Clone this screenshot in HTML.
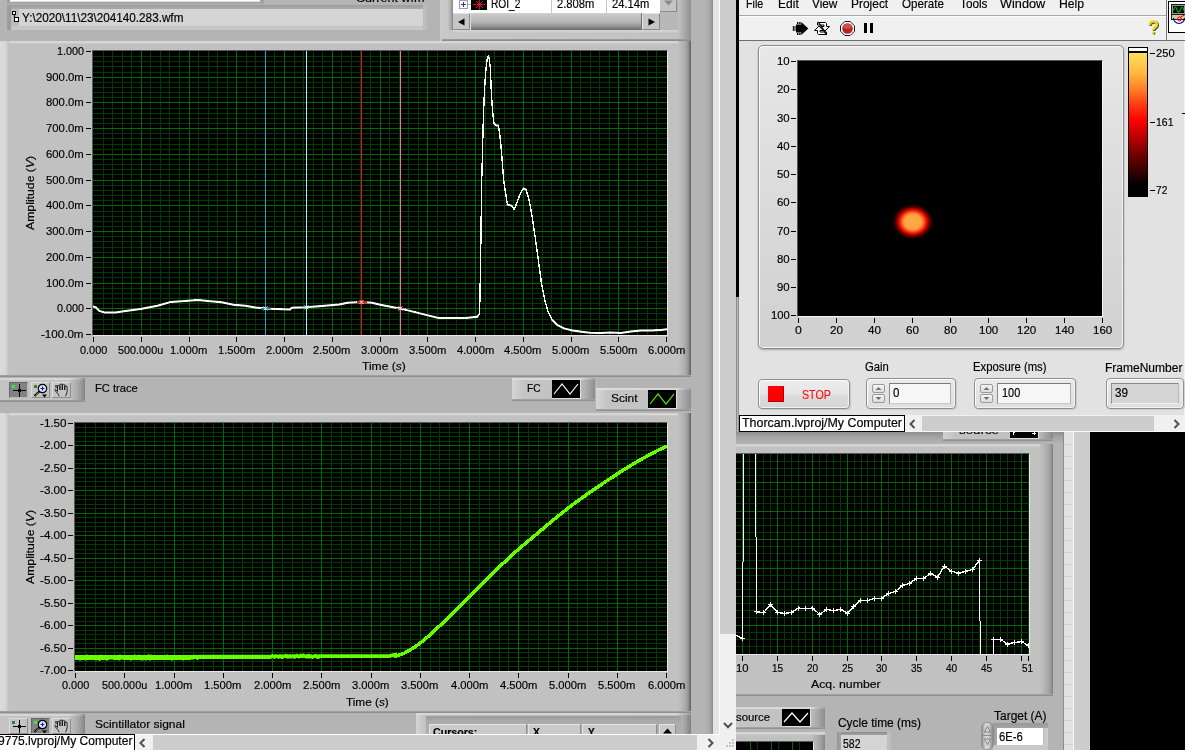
<!DOCTYPE html>
<html><head><meta charset="utf-8"><title>LabVIEW</title>
<style>
html,body{margin:0;padding:0;background:#000;}
#r{will-change:transform;position:relative;width:1185px;height:750px;overflow:hidden;background:#b4b4b4;font-family:"Liberation Sans",sans-serif;font-size:11.5px;}
#r div,#r span,#r svg{position:absolute;}
#r span{white-space:pre;transform-origin:0 50%;-webkit-text-stroke:0.18px currentColor;}
</style></head><body><div id="r">
<div style="left:0px;top:0px;width:736px;height:750px;background:#b4b4b4"></div>
<div style="left:7px;top:0px;width:257px;height:5px;background:linear-gradient(#9a9a9a,#b0b0b0)"></div>
<div style="left:10px;top:0px;width:250px;height:1px;background:#fff"></div>
<div style="left:10px;top:1px;width:250px;height:1px;background:#dcdcdc"></div>
<div style="left:350px;top:0;width:80px;height:4px;overflow:hidden">
<span style="left:6.10px;top:-6.53px;font-size:11.5px;line-height:11.5px;color:#000;font-weight:400;font-style:normal;transform:scaleX(1.0922);">Current wfm</span>
</div>
<div style="left:7px;top:5px;width:420px;height:25px;background:linear-gradient(#9c9c9c,#aaaaaa 4px,#b0b0b0 20px,#c4c4c4 21px,#c8c8c8);"></div>
<div style="left:7px;top:5px;width:4px;height:25px;background:linear-gradient(to right,#a0a0a0,#9a9a9a)"></div>
<div style="left:423px;top:5px;width:4px;height:25px;background:#bdbdbd"></div>
<div style="left:11px;top:9px;width:412px;height:17px;background:#d4d4d4"></div>
<div style="left:11px;top:9px;width:8px;height:17px;background:#bcbcbc"></div>
<svg style="left:12px;top:11px" width="7" height="12" viewBox="0 0 7 12" shape-rendering="crispEdges"><path d="M0.5 0.5h3v3h-3zM2.5 3.5v5M2.5 6.5h4v4h-4z" fill="#fff" stroke="#000" stroke-width="1"/></svg>
<span style="left:21.90px;top:12.04px;font-size:12px;line-height:12px;color:#000;font-weight:400;font-style:normal;transform:scaleX(0.9767);">Y:\2020\11\23\204140.283.wfm</span>
<div style="left:440px;top:0px;width:251px;height:41px;background:linear-gradient(to right,#cacaca,#c6c6c6 10px,#c2c2c2 238px,#a8a8a8 245px,#8e8e8e)"></div>
<div style="left:448px;top:0px;width:5px;height:30px;background:linear-gradient(to right,#c6c6c6,#a8a8a8 3px,#868686)"></div>
<div style="left:453px;top:29px;width:225px;height:4px;background:linear-gradient(#dadada,#d2d2d2 2px,#c6c6c6)"></div>
<div style="left:442px;top:39px;width:249px;height:2px;background:linear-gradient(#a0a0a0,#868686)"></div>
<div style="left:453px;top:0px;width:225px;height:30px;background:#b0b0b0"></div>
<div style="left:453px;top:0px;width:207px;height:13px;background:#fff"></div>
<div style="left:551px;top:0px;width:1px;height:13px;background:#c8c8c8"></div>
<div style="left:606px;top:0px;width:1px;height:13px;background:#c8c8c8"></div>
<div style="left:459px;top:0px;width:9px;height:9px;background:#fff;border:1px solid #9aa0b0;box-sizing:border-box"></div>
<svg style="left:459px;top:0px" width="9" height="9" shape-rendering="crispEdges"><path d="M2 4.5h5M4.5 2v5" stroke="#2040a0" stroke-width="1"/></svg>
<div style="left:468px;top:4px;width:3px;height:1px;background:#b0b0b0"></div>
<div style="left:471px;top:0px;width:16px;height:10px;background:#000"></div>
<svg style="left:471px;top:-3px" width="16" height="13"><path d="M2 7.5h12M8.5 1v12M5 4l7 7M12 4l-7 7" stroke="#ff2020" stroke-width="0.800" fill="none"/></svg>
<div style="left:488px;top:0;width:172px;height:13px;overflow:hidden">
<span style="left:3.10px;top:-2.36px;font-size:12px;line-height:12px;color:#000;font-weight:400;font-style:normal;transform:scaleX(0.8476);">ROI_2</span>
<span style="left:69.30px;top:-2.36px;font-size:12px;line-height:12px;color:#000;font-weight:400;font-style:normal;transform:scaleX(0.9343);">2.808m</span>
<span style="left:124.20px;top:-2.36px;font-size:12px;line-height:12px;color:#000;font-weight:400;font-style:normal;transform:scaleX(0.9318);">24.14m</span>
</div>
<div style="left:660px;top:0px;width:17px;height:12px;background:#c4c4c4;border-right:1px solid #8c8c8c;border-bottom:1px solid #8c8c8c;box-sizing:border-box"></div>
<svg style="left:663px;top:0px" width="11" height="8"><path d="M1 0.5h9l-4.5 5z" fill="#8a8a8a"/></svg>
<div style="left:660px;top:12px;width:18px;height:18px;background:#b8b8b8"></div>
<div style="left:453px;top:13px;width:207px;height:17px;background:#b4b4b4"></div>
<div style="left:453px;top:13px;width:17px;height:17px;background:#c6c6c6;border-right:1px solid #8a8a8a;border-bottom:1px solid #8a8a8a;border-top:1px solid #e4e4e4;box-sizing:border-box"></div>
<div style="left:642px;top:13px;width:18px;height:17px;background:#c6c6c6;border-right:1px solid #8a8a8a;border-bottom:1px solid #8a8a8a;border-top:1px solid #e4e4e4;border-left:1px solid #e4e4e4;box-sizing:border-box"></div>
<div style="left:470px;top:13px;width:172px;height:17px;background:linear-gradient(#d0d0d0,#c4c4c4 3px,#b4b4b4 9px,#8e8e8e 14px,#6a6a6a 17px);border-left:1px solid #e0e0e0;border-right:1px solid #707070;box-sizing:border-box"></div>
<svg style="left:457px;top:18px" width="9" height="8"><path d="M7.500 0.500v7L1 4z" fill="#000"/></svg>
<svg style="left:647px;top:18px" width="9" height="8"><path d="M1.500 0.500v7L8 4z" fill="#000"/></svg>
<div style="left:0px;top:41px;width:691px;height:336px;background:#c1c1c1"></div>
<div style="left:0px;top:41px;width:691px;height:3px;background:linear-gradient(#d4d4d4,#d6d6d6 1.500px,#c8c8c8 2.500px,#c2c2c2)"></div>
<div style="left:0px;top:41px;width:9px;height:336px;background:linear-gradient(to right,#dadada,#d8d8d8 5px,#c1c1c1)"></div>
<div style="left:678px;top:41px;width:13px;height:336px;background:linear-gradient(to right,#c1c1c1,#b4b4b4 5px,#a0a0a0 9px,#868686 11px,#5c5c5c 13px)"></div>
<div style="left:0px;top:375px;width:691px;height:2px;background:linear-gradient(#a8a8a8,#868686)"></div>
<div style="left:92px;top:50px;width:576px;height:286px;background:#000;border-left:1px solid #5a5a5a;border-top:1px solid #5a5a5a;border-right:1px solid #e8e8e8;border-bottom:1px solid #e8e8e8;box-sizing:border-box"></div>
<svg style="left:93px;top:51px" width="574" height="284" viewBox="93 51 574 284" shape-rendering="crispEdges"><path d="M103.5 51V335M112.5 51V335M122.5 51V335M131.5 51V335M150.5 51V335M160.5 51V335M169.5 51V335M179.5 51V335M198.5 51V335M208.5 51V335M217.5 51V335M227.5 51V335M246.5 51V335M255.5 51V335M265.5 51V335M274.5 51V335M294.5 51V335M303.5 51V335M313.5 51V335M322.5 51V335M341.5 51V335M351.5 51V335M360.5 51V335M370.5 51V335M389.5 51V335M399.5 51V335M408.5 51V335M418.5 51V335M437.5 51V335M446.5 51V335M456.5 51V335M465.5 51V335M485.5 51V335M494.5 51V335M504.5 51V335M513.5 51V335M532.5 51V335M542.5 51V335M551.5 51V335M561.5 51V335M580.5 51V335M590.5 51V335M599.5 51V335M609.5 51V335M628.5 51V335M637.5 51V335M647.5 51V335M656.5 51V335M93 56.5H667M93 61.5H667M93 66.5H667M93 72.5H667M93 82.5H667M93 87.5H667M93 92.5H667M93 97.5H667M93 108.5H667M93 113.5H667M93 118.5H667M93 123.5H667M93 133.5H667M93 138.5H667M93 144.5H667M93 149.5H667M93 159.5H667M93 164.5H667M93 169.5H667M93 174.5H667M93 185.5H667M93 190.5H667M93 195.5H667M93 200.5H667M93 211.5H667M93 216.5H667M93 221.5H667M93 226.5H667M93 236.5H667M93 241.5H667M93 247.5H667M93 252.5H667M93 262.5H667M93 267.5H667M93 272.5H667M93 277.5H667M93 288.5H667M93 293.5H667M93 298.5H667M93 303.5H667M93 313.5H667M93 319.5H667M93 324.5H667M93 329.5H667" stroke="#003c00" stroke-width="1" fill="none"/><path d="M141.5 51V335M189.5 51V335M236.5 51V335M284.5 51V335M332.5 51V335M380.5 51V335M427.5 51V335M475.5 51V335M523.5 51V335M571.5 51V335M618.5 51V335M93 77.5H667M93 102.5H667M93 128.5H667M93 154.5H667M93 180.5H667M93 205.5H667M93 231.5H667M93 257.5H667M93 283.5H667M93 308.5H667" stroke="#006a00" stroke-width="1" fill="none"/><path d="M265.5 51V335" stroke="#18a8cc" stroke-width="1"/><path d="M306.5 51V335" stroke="#a4f0fc" stroke-width="1"/><path d="M361.5 51V335" stroke="#f01410" stroke-width="1"/><path d="M400.5 51V335" stroke="#ee70a6" stroke-width="1"/><polyline points="93.0,306.5 96.0,307.5 99.3,310.9 105.2,312.6 115.3,312.6 123.8,311.2 140.6,309.0 157.5,305.7 171.0,301.9 184.5,301.1 198.0,299.9 208.0,301.1 221.6,302.3 233.5,304.8 245.3,305.7 255.4,307.5 265.5,308.4 275.7,309.0 290.0,309.5 291.8,307.8 306.2,307.3 318.8,306.2 339.1,304.5 347.5,302.8 361.0,301.9 372.0,302.8 381.3,305.0 399.8,308.4 415.0,312.1 426.8,315.1 438.6,318.0 465.7,318.0 477.5,316.8 479.2,313.8 479.6,312.4 480.2,283.6 481.1,224.8 481.7,180.0 482.0,171.0 483.0,130.0 484.0,101.0 485.0,81.0 486.0,69.0 487.0,60.0 488.4,55.4 489.4,60.0 490.4,69.0 491.0,85.0 492.0,103.0 493.0,115.0 494.0,123.4 496.0,125.4 498.0,125.4 499.0,129.0 500.0,137.0 501.0,146.0 502.0,158.0 503.0,171.0 503.7,180.0 505.2,190.7 507.4,204.6 511.6,205.6 514.2,209.5 517.0,202.4 520.2,193.9 523.4,188.5 526.0,189.6 528.7,198.2 531.9,215.2 535.1,236.6 538.3,260.0 541.5,283.6 544.7,299.6 547.9,311.3 552.2,319.9 557.5,325.2 564.0,328.4 572.5,330.5 583.2,332.0 590.0,332.7 600.5,332.9 610.6,332.6 620.8,332.9 630.9,331.6 641.0,330.4 651.1,330.4 661.3,329.9 666.8,329.2" fill="none" stroke="#fff" stroke-width="1.4" stroke-linejoin="round" shape-rendering="crispEdges"/><polyline points="93.0,306.5 96.0,307.5 99.3,310.9 105.2,312.6 115.3,312.6 123.8,311.2 140.6,309.0 157.5,305.7 171.0,301.9 184.5,301.1 198.0,299.9 208.0,301.1 221.6,302.3 233.5,304.8 245.3,305.7 255.4,307.5 265.5,308.4 275.7,309.0 290.0,309.5 291.8,307.8 306.2,307.3 318.8,306.2 339.1,304.5 347.5,302.8 361.0,301.9 372.0,302.8 381.3,305.0 399.8,308.4 415.0,312.1 426.8,315.1 438.6,318.0 465.7,318.0 477.5,316.8" fill="none" stroke="#fff" stroke-width="2" stroke-linejoin="round" stroke-linecap="round" shape-rendering="auto"/><polyline points="494.0,123.4 496.0,125.4 498.0,125.4" fill="none" stroke="#fff" stroke-width="2" stroke-linejoin="round" stroke-linecap="round" shape-rendering="auto"/><polyline points="507.4,204.6 511.6,205.6" fill="none" stroke="#fff" stroke-width="2" stroke-linejoin="round" stroke-linecap="round" shape-rendering="auto"/><polyline points="523.4,188.5 526.0,189.6" fill="none" stroke="#fff" stroke-width="2" stroke-linejoin="round" stroke-linecap="round" shape-rendering="auto"/><polyline points="552.2,319.9 557.5,325.2 564.0,328.4 572.5,330.5 583.2,332.0 590.0,332.7 600.5,332.9 610.6,332.6 620.8,332.9 630.9,331.6 641.0,330.4 651.1,330.4 661.3,329.9 666.8,329.2" fill="none" stroke="#fff" stroke-width="2" stroke-linejoin="round" stroke-linecap="round" shape-rendering="auto"/><path d="M260.5 308.4h10" stroke="#18a8cc" stroke-width="1.2" fill="none"/><path d="M263.5 306.4l4 4M267.5 306.4l-4 4" stroke="#fff" stroke-width="0.9" fill="none" shape-rendering="auto"/><path d="M301.5 307.3h10" stroke="#a4f0fc" stroke-width="1.2" fill="none"/><path d="M304.5 305.3l4 4M308.5 305.3l-4 4" stroke="#fff" stroke-width="0.9" fill="none" shape-rendering="auto"/><path d="M356.5 302h10" stroke="#f01410" stroke-width="1.2" fill="none"/><path d="M359.5 300l4 4M363.5 300l-4 4" stroke="#fff" stroke-width="0.9" fill="none" shape-rendering="auto"/><path d="M395.5 308.4h10" stroke="#ee70a6" stroke-width="1.2" fill="none"/><path d="M398.5 306.4l4 4M402.5 306.4l-4 4" stroke="#fff" stroke-width="0.9" fill="none" shape-rendering="auto"/></svg>
<div style="left:86px;top:51px;width:5px;height:1px;background:#000"></div>
<span style="left:56.80px;top:45.87px;font-size:11.5px;line-height:11.5px;color:#000;font-weight:400;font-style:normal;transform:scaleX(0.9381);">1.000</span>
<div style="left:86px;top:77px;width:5px;height:1px;background:#000"></div>
<span style="left:46.00px;top:71.87px;font-size:11.5px;line-height:11.5px;color:#000;font-weight:400;font-style:normal;transform:scaleX(0.9854);">900.0m</span>
<div style="left:86px;top:102px;width:5px;height:1px;background:#000"></div>
<span style="left:46.00px;top:96.87px;font-size:11.5px;line-height:11.5px;color:#000;font-weight:400;font-style:normal;transform:scaleX(0.9854);">800.0m</span>
<div style="left:86px;top:128px;width:5px;height:1px;background:#000"></div>
<span style="left:46.00px;top:122.87px;font-size:11.5px;line-height:11.5px;color:#000;font-weight:400;font-style:normal;transform:scaleX(0.9854);">700.0m</span>
<div style="left:86px;top:154px;width:5px;height:1px;background:#000"></div>
<span style="left:46.00px;top:148.87px;font-size:11.5px;line-height:11.5px;color:#000;font-weight:400;font-style:normal;transform:scaleX(0.9854);">600.0m</span>
<div style="left:86px;top:180px;width:5px;height:1px;background:#000"></div>
<span style="left:46.00px;top:174.87px;font-size:11.5px;line-height:11.5px;color:#000;font-weight:400;font-style:normal;transform:scaleX(0.9854);">500.0m</span>
<div style="left:86px;top:205px;width:5px;height:1px;background:#000"></div>
<span style="left:46.00px;top:199.87px;font-size:11.5px;line-height:11.5px;color:#000;font-weight:400;font-style:normal;transform:scaleX(0.9854);">400.0m</span>
<div style="left:86px;top:231px;width:5px;height:1px;background:#000"></div>
<span style="left:46.00px;top:225.87px;font-size:11.5px;line-height:11.5px;color:#000;font-weight:400;font-style:normal;transform:scaleX(0.9854);">300.0m</span>
<div style="left:86px;top:257px;width:5px;height:1px;background:#000"></div>
<span style="left:46.00px;top:251.87px;font-size:11.5px;line-height:11.5px;color:#000;font-weight:400;font-style:normal;transform:scaleX(0.9854);">200.0m</span>
<div style="left:86px;top:283px;width:5px;height:1px;background:#000"></div>
<span style="left:46.00px;top:277.87px;font-size:11.5px;line-height:11.5px;color:#000;font-weight:400;font-style:normal;transform:scaleX(0.9854);">100.0m</span>
<div style="left:86px;top:308px;width:5px;height:1px;background:#000"></div>
<span style="left:56.80px;top:302.87px;font-size:11.5px;line-height:11.5px;color:#000;font-weight:400;font-style:normal;transform:scaleX(0.9381);">0.000</span>
<div style="left:86px;top:334px;width:5px;height:1px;background:#000"></div>
<span style="left:41.30px;top:328.87px;font-size:11.5px;line-height:11.5px;color:#000;font-weight:400;font-style:normal;transform:scaleX(1.0074);">-100.0m</span>
<div style="left:93px;top:337px;width:1px;height:5px;background:#000"></div>
<span style="left:79.65px;top:344.87px;font-size:11.5px;line-height:11.5px;color:#000;font-weight:400;font-style:normal;transform:scaleX(0.9485);">0.000</span>
<div style="left:141px;top:337px;width:1px;height:5px;background:#000"></div>
<span style="left:118.45px;top:344.87px;font-size:11.5px;line-height:11.5px;color:#000;font-weight:400;font-style:normal;transform:scaleX(0.9423);">500.000u</span>
<div style="left:189px;top:337px;width:1px;height:5px;background:#000"></div>
<span style="left:170.10px;top:344.87px;font-size:11.5px;line-height:11.5px;color:#000;font-weight:400;font-style:normal;transform:scaleX(0.9750);">1.000m</span>
<div style="left:236px;top:337px;width:1px;height:5px;background:#000"></div>
<span style="left:217.85px;top:344.87px;font-size:11.5px;line-height:11.5px;color:#000;font-weight:400;font-style:normal;transform:scaleX(0.9750);">1.500m</span>
<div style="left:284px;top:337px;width:1px;height:5px;background:#000"></div>
<span style="left:265.60px;top:344.87px;font-size:11.5px;line-height:11.5px;color:#000;font-weight:400;font-style:normal;transform:scaleX(0.9750);">2.000m</span>
<div style="left:332px;top:337px;width:1px;height:5px;background:#000"></div>
<span style="left:313.35px;top:344.87px;font-size:11.5px;line-height:11.5px;color:#000;font-weight:400;font-style:normal;transform:scaleX(0.9750);">2.500m</span>
<div style="left:380px;top:337px;width:1px;height:5px;background:#000"></div>
<span style="left:361.10px;top:344.87px;font-size:11.5px;line-height:11.5px;color:#000;font-weight:400;font-style:normal;transform:scaleX(0.9750);">3.000m</span>
<div style="left:427px;top:337px;width:1px;height:5px;background:#000"></div>
<span style="left:408.85px;top:344.87px;font-size:11.5px;line-height:11.5px;color:#000;font-weight:400;font-style:normal;transform:scaleX(0.9750);">3.500m</span>
<div style="left:475px;top:337px;width:1px;height:5px;background:#000"></div>
<span style="left:456.60px;top:344.87px;font-size:11.5px;line-height:11.5px;color:#000;font-weight:400;font-style:normal;transform:scaleX(0.9750);">4.000m</span>
<div style="left:523px;top:337px;width:1px;height:5px;background:#000"></div>
<span style="left:504.35px;top:344.87px;font-size:11.5px;line-height:11.5px;color:#000;font-weight:400;font-style:normal;transform:scaleX(0.9750);">4.500m</span>
<div style="left:571px;top:337px;width:1px;height:5px;background:#000"></div>
<span style="left:552.10px;top:344.87px;font-size:11.5px;line-height:11.5px;color:#000;font-weight:400;font-style:normal;transform:scaleX(0.9750);">5.000m</span>
<div style="left:618px;top:337px;width:1px;height:5px;background:#000"></div>
<span style="left:599.85px;top:344.87px;font-size:11.5px;line-height:11.5px;color:#000;font-weight:400;font-style:normal;transform:scaleX(0.9750);">5.500m</span>
<div style="left:666px;top:337px;width:1px;height:5px;background:#000"></div>
<span style="left:647.60px;top:344.87px;font-size:11.5px;line-height:11.5px;color:#000;font-weight:400;font-style:normal;transform:scaleX(0.9750);">6.000m</span>
<span style="left:361.70px;top:361.27px;font-size:11.5px;line-height:11.5px;color:#000;font-weight:400;font-style:normal;transform:scaleX(1.0491);">Time (<i>s</i>)</span>
<div style="left:30px;top:193px;width:0;height:0;transform:rotate(-90deg)">
<span style="left:-37.10px;top:-5.43px;font-size:11.5px;line-height:11.5px;color:#000;font-weight:400;font-style:normal;transform:scaleX(1.0648);">Amplitude (<i>V</i>)</span>
</div>
<div style="left:0;top:378px;width:86px;height:24px;overflow:hidden">
<div style="left:0px;top:0px;width:85px;height:24px;background:linear-gradient(to right,#c4c4c4,#c2c2c2 70px,#a8a8a8 78px,#8a8a8a 84px,#808080)"></div>
<div style="left:0px;top:0px;width:85px;height:2px;background:linear-gradient(to right,#d6d6d6,#d6d6d6 70px,#b0b0b0 80px,#8c8c8c)"></div>
<div style="left:0px;top:22px;width:85px;height:2px;background:linear-gradient(#a0a0a0,#8c8c8c)"></div>
<div style="left:9px;top:4px;width:19px;height:16px;background:#828282;border-top:1px solid #666;border-left:1px solid #666;border-right:1px solid #b8b8b8;border-bottom:1px solid #b8b8b8;box-sizing:border-box"></div>
<div style="left:12px;top:7px;width:3px;height:3px;background:#30f030"></div>
<div style="left:31px;top:4px;width:19px;height:16px;background:#c4c4c4;border-top:1px solid #dcdcdc;border-left:1px solid #dcdcdc;border-right:1px solid #8c8c8c;border-bottom:1px solid #8c8c8c;box-sizing:border-box"></div>
<div style="left:34px;top:7px;width:3px;height:3px;background:#3a7a3a"></div>
<div style="left:52px;top:4px;width:19px;height:16px;background:#c4c4c4;border-top:1px solid #dcdcdc;border-left:1px solid #dcdcdc;border-right:1px solid #8c8c8c;border-bottom:1px solid #8c8c8c;box-sizing:border-box"></div>
<div style="left:55px;top:7px;width:3px;height:3px;background:#3a7a3a"></div>
<svg style="left:9px;top:4px" width="19" height="16" shape-rendering="crispEdges"><path d="M4 8.5h13M10.5 2v13" stroke="#000" stroke-width="1"/><rect x="9.5" y="7.5" width="2" height="2" fill="none" stroke="#000"/></svg>
<svg style="left:31px;top:4px" width="19" height="16"><circle cx="11.5" cy="6.5" r="4.2" fill="#e8e8ff" stroke="#000" stroke-width="1.2"/><path d="M9.5 6.5h4M11.5 4.5v4" stroke="#1020c0" stroke-width="1.2"/><path d="M8.5 9.5l-5 4.5" stroke="#000" stroke-width="2.2"/><path d="M8 10.5l-3.5 3" stroke="#ddd" stroke-width="0.7"/><path d="M11 12.5h5l-2.5 3z" fill="#000"/></svg>
<svg style="left:52px;top:4px" width="19" height="16"><path d="M5.500 9.500V4.500a1.200 1.200 0 0 1 2.400 0V8M7.900 8V3.200a1.200 1.200 0 0 1 2.400 0V8M10.300 8V3.500a1.200 1.200 0 0 1 2.400 0V8M12.700 8V5a1.200 1.200 0 0 1 2.400 0V9.500Q15 12 13.500 14.200M5.500 9.500L4 7.600Q2.800 7 3 8.500L6.500 12.500L7 14.200" fill="none" stroke="#000" stroke-width="0.800"/></svg>
</div>
<span style="left:95.30px;top:383.07px;font-size:11.5px;line-height:11.5px;color:#000;font-weight:400;font-style:normal;transform:scaleX(0.9684);">FC trace</span>
<div style="left:512px;top:378px;width:83px;height:23px;background:linear-gradient(to right,#d6d6d6,#c4c4c4 12px,#c2c2c2 67px,#a4a4a4 77px,#8c8c8c)"></div>
<div style="left:512px;top:378px;width:83px;height:2px;background:linear-gradient(to right,#dcdcdc,#d8d8d8 69px,#a0a0a0)"></div>
<div style="left:512px;top:399px;width:83px;height:2px;background:linear-gradient(#a8a8a8,#8a8a8a)"></div>
<div style="left:552px;top:380px;width:29px;height:19px;background:#000;border-right:1px solid #e0e0e0;border-bottom:1px solid #e0e0e0;box-sizing:border-box"></div>
<svg style="left:552px;top:380px" width="28" height="18"><path d="M2 14L10 4L18 14L26 4" stroke="#fff" stroke-width="1.2" fill="none"/></svg>
<span style="left:527.30px;top:382.87px;font-size:11.5px;line-height:11.5px;color:#000;font-weight:400;font-style:normal;transform:scaleX(0.8929);">FC</span>
<div style="left:596px;top:388px;width:95px;height:23px;background:linear-gradient(to right,#d6d6d6,#c4c4c4 12px,#c2c2c2 79px,#a4a4a4 89px,#8c8c8c)"></div>
<div style="left:596px;top:388px;width:95px;height:2px;background:linear-gradient(to right,#dcdcdc,#d8d8d8 81px,#a0a0a0)"></div>
<div style="left:596px;top:409px;width:95px;height:2px;background:linear-gradient(#a8a8a8,#8a8a8a)"></div>
<div style="left:648px;top:390px;width:29px;height:19px;background:#000;border-right:1px solid #e0e0e0;border-bottom:1px solid #e0e0e0;box-sizing:border-box"></div>
<svg style="left:648px;top:390px" width="28" height="18"><path d="M2 14L10 4L18 14L26 4" stroke="#60f000" stroke-width="1.2" fill="none"/></svg>
<span style="left:610.90px;top:392.87px;font-size:11.5px;line-height:11.5px;color:#000;font-weight:400;font-style:normal;transform:scaleX(1.0400);">Scint</span>
<div style="left:0px;top:413px;width:691px;height:300px;background:#c1c1c1"></div>
<div style="left:0px;top:413px;width:691px;height:3px;background:linear-gradient(#d4d4d4,#d6d6d6 1.500px,#c8c8c8 2.500px,#c2c2c2)"></div>
<div style="left:0px;top:413px;width:9px;height:300px;background:linear-gradient(to right,#dadada,#d8d8d8 5px,#c1c1c1)"></div>
<div style="left:678px;top:413px;width:13px;height:300px;background:linear-gradient(to right,#c1c1c1,#b4b4b4 5px,#a0a0a0 9px,#868686 11px,#5c5c5c 13px)"></div>
<div style="left:0px;top:711px;width:691px;height:2px;background:linear-gradient(#a8a8a8,#868686)"></div>
<div style="left:74px;top:422px;width:594px;height:250px;background:#000;border-left:1px solid #5a5a5a;border-top:1px solid #5a5a5a;border-right:1px solid #e8e8e8;border-bottom:1px solid #e8e8e8;box-sizing:border-box"></div>
<svg style="left:75px;top:423px" width="592" height="248" viewBox="75 423 592 248" shape-rendering="crispEdges"><path d="M85.5 423V671M95.5 423V671M105.5 423V671M114.5 423V671M134.5 423V671M144.5 423V671M154.5 423V671M164.5 423V671M183.5 423V671M193.5 423V671M203.5 423V671M213.5 423V671M233.5 423V671M242.5 423V671M252.5 423V671M262.5 423V671M282.5 423V671M292.5 423V671M302.5 423V671M311.5 423V671M331.5 423V671M341.5 423V671M351.5 423V671M361.5 423V671M380.5 423V671M390.5 423V671M400.5 423V671M410.5 423V671M430.5 423V671M439.5 423V671M449.5 423V671M459.5 423V671M479.5 423V671M489.5 423V671M499.5 423V671M508.5 423V671M528.5 423V671M538.5 423V671M548.5 423V671M558.5 423V671M577.5 423V671M587.5 423V671M597.5 423V671M607.5 423V671M627.5 423V671M636.5 423V671M646.5 423V671M656.5 423V671M75 427.5H667M75 432.5H667M75 436.5H667M75 441.5H667M75 450.5H667M75 454.5H667M75 459.5H667M75 463.5H667M75 472.5H667M75 477.5H667M75 481.5H667M75 486.5H667M75 495.5H667M75 499.5H667M75 504.5H667M75 508.5H667M75 517.5H667M75 522.5H667M75 526.5H667M75 531.5H667M75 540.5H667M75 544.5H667M75 549.5H667M75 553.5H667M75 562.5H667M75 567.5H667M75 571.5H667M75 576.5H667M75 585.5H667M75 589.5H667M75 594.5H667M75 598.5H667M75 607.5H667M75 612.5H667M75 616.5H667M75 621.5H667M75 630.5H667M75 634.5H667M75 639.5H667M75 643.5H667M75 652.5H667M75 657.5H667M75 661.5H667M75 666.5H667" stroke="#003c00" stroke-width="1" fill="none"/><path d="M124.5 423V671M174.5 423V671M223.5 423V671M272.5 423V671M321.5 423V671M371.5 423V671M420.5 423V671M469.5 423V671M518.5 423V671M568.5 423V671M617.5 423V671M75 445.5H667M75 468.5H667M75 490.5H667M75 513.5H667M75 535.5H667M75 558.5H667M75 580.5H667M75 603.5H667M75 625.5H667M75 648.5H667" stroke="#006a00" stroke-width="1" fill="none"/><polyline points="393.9,656.7 404.3,653.1 414.7,647.2 425.1,639.2 435.5,629.8 449.4,616.7 466.7,599.3 484.0,582.0 501.4,565.0 518.7,549.0 536.1,534.5 553.4,519.9 570.8,506.0 588.1,493.5 605.5,481.7 622.8,470.3 640.1,459.9 657.5,450.5 667.2,446.0" fill="none" stroke="#66ff00" stroke-width="3.5" stroke-linejoin="round"/><polygon points="75.0,655.0 76.0,655.0 77.0,655.0 78.0,655.0 79.0,655.0 80.0,655.0 81.0,655.0 82.0,655.0 83.0,655.0 84.0,655.0 85.0,655.0 86.0,655.0 87.0,654.2 88.0,655.0 89.0,655.0 90.0,655.0 91.0,655.0 92.0,655.0 93.0,655.0 94.0,655.0 95.0,655.0 96.0,655.0 97.0,655.0 98.0,655.0 99.0,655.0 100.0,655.0 101.0,654.2 102.0,655.0 103.0,655.0 104.0,655.0 105.0,655.0 106.0,655.0 107.0,655.0 108.0,655.0 109.0,655.0 110.0,655.0 111.0,655.0 112.0,655.0 113.0,655.0 114.0,655.0 115.0,655.0 116.0,655.0 117.0,655.0 118.0,655.0 119.0,655.0 120.0,654.2 121.0,655.0 122.0,655.0 123.0,655.0 124.0,655.0 125.0,655.0 126.0,655.0 127.0,655.0 128.0,655.0 129.0,655.0 130.0,655.0 131.0,655.0 132.0,655.0 133.0,655.0 134.0,655.0 135.0,654.2 136.0,655.0 137.0,655.0 138.0,655.0 139.0,654.2 140.0,655.0 141.0,655.0 142.0,655.0 143.0,655.0 144.0,655.0 145.0,655.0 146.0,655.0 147.0,655.0 148.0,654.2 149.0,654.2 150.0,655.0 151.0,654.2 152.0,655.0 153.0,655.0 154.0,655.0 155.0,655.0 156.0,655.0 157.0,655.0 158.0,655.0 159.0,655.0 160.0,655.0 161.0,655.0 162.0,655.0 163.0,655.0 164.0,655.0 165.0,655.0 166.0,655.0 167.0,654.2 168.0,655.0 169.0,655.0 170.0,655.0 171.0,655.0 172.0,655.0 173.0,655.0 174.0,655.0 175.0,655.0 176.0,655.0 177.0,655.0 178.0,655.0 179.0,655.0 180.0,655.0 181.0,655.0 182.0,655.0 183.0,655.0 184.0,655.0 185.0,655.0 186.0,655.0 187.0,655.0 188.0,655.0 189.0,655.0 190.0,655.0 191.0,655.0 192.0,654.7 193.0,655.0 194.0,654.7 195.0,654.7 196.0,654.7 197.0,655.0 198.0,655.0 199.0,654.7 200.0,654.7 201.0,654.7 202.0,654.7 203.0,654.7 204.0,654.7 205.0,654.7 206.0,654.7 207.0,654.7 208.0,654.7 209.0,654.7 210.0,654.7 211.0,654.7 212.0,654.7 213.0,654.7 214.0,654.7 215.0,654.7 216.0,654.7 217.0,654.7 218.0,654.7 219.0,654.7 220.0,654.7 221.0,654.7 222.0,654.7 223.0,654.7 224.0,654.7 225.0,654.7 226.0,654.7 227.0,654.7 228.0,654.7 229.0,654.7 230.0,654.7 231.0,654.7 232.0,654.7 233.0,654.7 234.0,654.7 235.0,654.7 236.0,654.7 237.0,654.7 238.0,654.7 239.0,654.7 240.0,654.7 241.0,654.7 242.0,654.7 243.0,654.7 244.0,654.7 245.0,654.7 246.0,654.7 247.0,654.7 248.0,654.7 249.0,654.7 250.0,654.7 251.0,654.7 252.0,654.7 253.0,654.7 254.0,654.7 255.0,654.7 256.0,654.7 257.0,654.7 258.0,654.7 259.0,654.7 260.0,654.7 261.0,654.7 262.0,654.7 263.0,654.7 264.0,654.7 265.0,654.7 266.0,654.7 267.0,654.7 268.0,654.7 269.0,654.7 270.0,654.7 271.0,654.7 272.0,653.6 273.0,654.2 274.0,654.7 275.0,654.2 276.0,654.2 277.0,654.2 278.0,654.7 279.0,654.7 280.0,653.6 281.0,654.7 282.0,654.2 283.0,654.7 284.0,654.2 285.0,654.2 286.0,653.6 287.0,654.2 288.0,654.2 289.0,654.7 290.0,653.6 291.0,654.7 292.0,654.2 293.0,654.2 294.0,654.2 295.0,654.2 296.0,654.2 297.0,653.6 298.0,654.2 299.0,654.7 300.0,653.6 301.0,653.6 302.0,654.2 303.0,653.6 304.0,653.6 305.0,654.2 306.0,654.7 307.0,653.6 308.0,654.2 309.0,653.6 310.0,654.2 311.0,654.2 312.0,654.7 313.0,654.7 314.0,654.2 315.0,654.2 316.0,653.6 317.0,654.7 318.0,654.2 319.0,654.2 320.0,654.2 321.0,654.2 322.0,654.2 323.0,654.2 324.0,654.2 325.0,654.2 326.0,654.2 327.0,654.2 328.0,654.2 329.0,654.2 330.0,654.2 331.0,654.2 332.0,654.2 333.0,654.2 334.0,654.2 335.0,654.2 336.0,654.2 337.0,654.2 338.0,654.2 339.0,654.2 340.0,654.2 341.0,654.2 342.0,654.2 343.0,654.2 344.0,654.2 345.0,654.2 346.0,654.2 347.0,654.2 348.0,654.2 349.0,654.2 350.0,654.2 351.0,654.2 352.0,654.2 353.0,654.2 354.0,654.2 355.0,654.2 356.0,654.2 357.0,654.2 358.0,654.2 359.0,654.2 360.0,654.2 361.0,654.2 362.0,654.2 363.0,654.2 364.0,654.2 365.0,654.2 366.0,654.2 367.0,654.2 368.0,654.2 369.0,654.2 370.0,654.2 371.0,654.2 372.0,654.2 373.0,654.2 374.0,654.2 375.0,654.2 376.0,654.2 377.0,654.2 378.0,654.2 379.0,654.2 380.0,654.2 381.0,654.2 382.0,654.2 383.0,654.2 384.0,654.2 385.0,654.2 386.0,654.2 387.0,654.2 388.0,654.2 389.0,654.2 390.0,654.0 391.0,653.8 392.0,653.5 393.0,653.3 394.0,653.1 395.0,652.9 396.0,652.7 397.0,652.4 397.0,656.1 396.0,656.4 395.0,656.6 394.0,656.8 393.0,657.0 392.0,657.2 391.0,657.5 390.0,657.7 389.0,657.9 388.0,657.9 387.0,657.9 386.0,657.9 385.0,657.9 384.0,657.9 383.0,657.9 382.0,657.9 381.0,657.9 380.0,657.9 379.0,657.9 378.0,657.9 377.0,657.9 376.0,657.9 375.0,657.9 374.0,657.9 373.0,657.9 372.0,657.9 371.0,657.9 370.0,657.9 369.0,657.9 368.0,657.9 367.0,657.9 366.0,657.9 365.0,657.9 364.0,657.9 363.0,657.9 362.0,657.9 361.0,657.9 360.0,657.9 359.0,657.9 358.0,657.9 357.0,657.9 356.0,657.9 355.0,657.9 354.0,657.9 353.0,657.9 352.0,657.9 351.0,657.9 350.0,657.9 349.0,657.9 348.0,657.9 347.0,657.9 346.0,657.9 345.0,657.9 344.0,657.9 343.0,657.9 342.0,657.9 341.0,657.9 340.0,657.9 339.0,657.9 338.0,657.9 337.0,657.9 336.0,657.9 335.0,657.9 334.0,657.9 333.0,657.9 332.0,657.9 331.0,657.9 330.0,657.9 329.0,657.9 328.0,657.9 327.0,657.9 326.0,657.9 325.0,657.9 324.0,657.9 323.0,657.9 322.0,657.9 321.0,657.9 320.0,657.9 319.0,659.0 318.0,659.0 317.0,659.0 316.0,657.9 315.0,657.9 314.0,657.9 313.0,659.0 312.0,659.0 311.0,657.9 310.0,659.0 309.0,657.9 308.0,659.0 307.0,657.9 306.0,659.0 305.0,657.9 304.0,657.9 303.0,657.9 302.0,657.9 301.0,657.9 300.0,657.9 299.0,659.0 298.0,657.9 297.0,657.9 296.0,657.9 295.0,659.0 294.0,659.0 293.0,657.9 292.0,657.9 291.0,659.0 290.0,657.9 289.0,659.0 288.0,657.9 287.0,659.0 286.0,657.9 285.0,657.9 284.0,657.9 283.0,659.0 282.0,659.0 281.0,659.0 280.0,657.9 279.0,659.0 278.0,659.0 277.0,657.9 276.0,657.9 275.0,659.0 274.0,659.0 273.0,657.9 272.0,657.9 271.0,659.0 270.0,659.0 269.0,659.0 268.0,659.0 267.0,659.0 266.0,659.0 265.0,659.0 264.0,659.0 263.0,659.0 262.0,659.0 261.0,659.0 260.0,659.0 259.0,659.0 258.0,659.0 257.0,659.0 256.0,659.0 255.0,659.0 254.0,659.0 253.0,659.0 252.0,659.0 251.0,659.0 250.0,659.0 249.0,659.0 248.0,659.0 247.0,659.0 246.0,659.0 245.0,659.0 244.0,659.0 243.0,659.0 242.0,659.0 241.0,659.0 240.0,659.0 239.0,659.0 238.0,659.0 237.0,659.0 236.0,659.0 235.0,659.0 234.0,659.0 233.0,659.0 232.0,659.0 231.0,659.0 230.0,659.0 229.0,659.0 228.0,659.0 227.0,659.0 226.0,659.0 225.0,659.0 224.0,659.0 223.0,659.0 222.0,659.0 221.0,659.0 220.0,659.0 219.0,659.0 218.0,659.0 217.0,659.0 216.0,659.0 215.0,659.0 214.0,659.0 213.0,659.0 212.0,659.0 211.0,659.0 210.0,659.0 209.0,659.0 208.0,659.0 207.0,659.0 206.0,659.0 205.0,659.0 204.0,659.0 203.0,659.0 202.0,659.0 201.0,659.0 200.0,659.0 199.0,659.0 198.0,660.0 197.0,660.0 196.0,659.0 195.0,659.0 194.0,659.0 193.0,660.0 192.0,659.0 191.0,660.0 190.0,660.0 189.0,660.0 188.0,660.0 187.0,660.0 186.0,660.0 185.0,660.0 184.0,660.0 183.0,660.8 182.0,660.0 181.0,660.0 180.0,660.0 179.0,660.0 178.0,660.0 177.0,660.0 176.0,660.0 175.0,660.0 174.0,660.0 173.0,660.0 172.0,661.0 171.0,660.0 170.0,660.0 169.0,660.0 168.0,660.0 167.0,660.0 166.0,660.0 165.0,660.0 164.0,660.0 163.0,660.0 162.0,660.0 161.0,660.0 160.0,660.0 159.0,660.0 158.0,660.0 157.0,660.0 156.0,660.0 155.0,660.0 154.0,660.0 153.0,660.0 152.0,660.0 151.0,660.0 150.0,661.0 149.0,660.0 148.0,660.0 147.0,660.0 146.0,660.8 145.0,660.0 144.0,660.0 143.0,660.8 142.0,660.0 141.0,660.8 140.0,660.0 139.0,660.0 138.0,660.0 137.0,660.0 136.0,660.0 135.0,660.0 134.0,660.0 133.0,660.0 132.0,660.0 131.0,661.0 130.0,660.0 129.0,660.0 128.0,660.0 127.0,660.0 126.0,660.0 125.0,660.0 124.0,660.0 123.0,660.0 122.0,659.0 121.0,660.0 120.0,660.0 119.0,660.8 118.0,660.0 117.0,660.0 116.0,660.0 115.0,660.0 114.0,660.0 113.0,660.0 112.0,659.0 111.0,660.0 110.0,659.0 109.0,660.0 108.0,660.0 107.0,661.0 106.0,660.0 105.0,660.0 104.0,660.0 103.0,660.0 102.0,660.0 101.0,660.0 100.0,661.0 99.0,660.8 98.0,660.0 97.0,660.0 96.0,660.8 95.0,660.0 94.0,660.0 93.0,660.0 92.0,660.0 91.0,660.0 90.0,660.0 89.0,660.0 88.0,660.0 87.0,660.0 86.0,660.8 85.0,660.0 84.0,660.0 83.0,660.0 82.0,660.0 81.0,660.0 80.0,661.0 79.0,660.0 78.0,660.0 77.0,660.0 76.0,660.0 75.0,660.0" fill="#66ff00" shape-rendering="auto"/></svg>
<div style="left:68px;top:423px;width:5px;height:1px;background:#000"></div>
<span style="left:40.30px;top:417.87px;font-size:11.5px;line-height:11.5px;color:#000;font-weight:400;font-style:normal;transform:scaleX(1.0145);">-1.50</span>
<div style="left:68px;top:445px;width:5px;height:1px;background:#000"></div>
<span style="left:40.30px;top:439.87px;font-size:11.5px;line-height:11.5px;color:#000;font-weight:400;font-style:normal;transform:scaleX(1.0145);">-2.00</span>
<div style="left:68px;top:468px;width:5px;height:1px;background:#000"></div>
<span style="left:40.30px;top:462.87px;font-size:11.5px;line-height:11.5px;color:#000;font-weight:400;font-style:normal;transform:scaleX(1.0145);">-2.50</span>
<div style="left:68px;top:490px;width:5px;height:1px;background:#000"></div>
<span style="left:40.30px;top:484.87px;font-size:11.5px;line-height:11.5px;color:#000;font-weight:400;font-style:normal;transform:scaleX(1.0145);">-3.00</span>
<div style="left:68px;top:513px;width:5px;height:1px;background:#000"></div>
<span style="left:40.30px;top:507.87px;font-size:11.5px;line-height:11.5px;color:#000;font-weight:400;font-style:normal;transform:scaleX(1.0145);">-3.50</span>
<div style="left:68px;top:535px;width:5px;height:1px;background:#000"></div>
<span style="left:40.30px;top:529.87px;font-size:11.5px;line-height:11.5px;color:#000;font-weight:400;font-style:normal;transform:scaleX(1.0145);">-4.00</span>
<div style="left:68px;top:558px;width:5px;height:1px;background:#000"></div>
<span style="left:40.30px;top:552.87px;font-size:11.5px;line-height:11.5px;color:#000;font-weight:400;font-style:normal;transform:scaleX(1.0145);">-4.50</span>
<div style="left:68px;top:580px;width:5px;height:1px;background:#000"></div>
<span style="left:40.30px;top:574.87px;font-size:11.5px;line-height:11.5px;color:#000;font-weight:400;font-style:normal;transform:scaleX(1.0145);">-5.00</span>
<div style="left:68px;top:603px;width:5px;height:1px;background:#000"></div>
<span style="left:40.30px;top:597.87px;font-size:11.5px;line-height:11.5px;color:#000;font-weight:400;font-style:normal;transform:scaleX(1.0145);">-5.50</span>
<div style="left:68px;top:625px;width:5px;height:1px;background:#000"></div>
<span style="left:40.30px;top:619.87px;font-size:11.5px;line-height:11.5px;color:#000;font-weight:400;font-style:normal;transform:scaleX(1.0145);">-6.00</span>
<div style="left:68px;top:648px;width:5px;height:1px;background:#000"></div>
<span style="left:40.30px;top:642.87px;font-size:11.5px;line-height:11.5px;color:#000;font-weight:400;font-style:normal;transform:scaleX(1.0145);">-6.50</span>
<div style="left:68px;top:670px;width:5px;height:1px;background:#000"></div>
<span style="left:40.30px;top:664.87px;font-size:11.5px;line-height:11.5px;color:#000;font-weight:400;font-style:normal;transform:scaleX(1.0145);">-7.00</span>
<div style="left:75px;top:673px;width:1px;height:5px;background:#000"></div>
<span style="left:61.65px;top:680.47px;font-size:11.5px;line-height:11.5px;color:#000;font-weight:400;font-style:normal;transform:scaleX(0.9485);">0.000</span>
<div style="left:124px;top:673px;width:1px;height:5px;background:#000"></div>
<span style="left:101.95px;top:680.47px;font-size:11.5px;line-height:11.5px;color:#000;font-weight:400;font-style:normal;transform:scaleX(0.9423);">500.000u</span>
<div style="left:174px;top:673px;width:1px;height:5px;background:#000"></div>
<span style="left:155.10px;top:680.47px;font-size:11.5px;line-height:11.5px;color:#000;font-weight:400;font-style:normal;transform:scaleX(0.9750);">1.000m</span>
<div style="left:223px;top:673px;width:1px;height:5px;background:#000"></div>
<span style="left:204.35px;top:680.47px;font-size:11.5px;line-height:11.5px;color:#000;font-weight:400;font-style:normal;transform:scaleX(0.9750);">1.500m</span>
<div style="left:272px;top:673px;width:1px;height:5px;background:#000"></div>
<span style="left:253.60px;top:680.47px;font-size:11.5px;line-height:11.5px;color:#000;font-weight:400;font-style:normal;transform:scaleX(0.9750);">2.000m</span>
<div style="left:321px;top:673px;width:1px;height:5px;background:#000"></div>
<span style="left:302.85px;top:680.47px;font-size:11.5px;line-height:11.5px;color:#000;font-weight:400;font-style:normal;transform:scaleX(0.9750);">2.500m</span>
<div style="left:371px;top:673px;width:1px;height:5px;background:#000"></div>
<span style="left:352.10px;top:680.47px;font-size:11.5px;line-height:11.5px;color:#000;font-weight:400;font-style:normal;transform:scaleX(0.9750);">3.000m</span>
<div style="left:420px;top:673px;width:1px;height:5px;background:#000"></div>
<span style="left:401.35px;top:680.47px;font-size:11.5px;line-height:11.5px;color:#000;font-weight:400;font-style:normal;transform:scaleX(0.9750);">3.500m</span>
<div style="left:469px;top:673px;width:1px;height:5px;background:#000"></div>
<span style="left:450.60px;top:680.47px;font-size:11.5px;line-height:11.5px;color:#000;font-weight:400;font-style:normal;transform:scaleX(0.9750);">4.000m</span>
<div style="left:518px;top:673px;width:1px;height:5px;background:#000"></div>
<span style="left:499.85px;top:680.47px;font-size:11.5px;line-height:11.5px;color:#000;font-weight:400;font-style:normal;transform:scaleX(0.9750);">4.500m</span>
<div style="left:568px;top:673px;width:1px;height:5px;background:#000"></div>
<span style="left:549.10px;top:680.47px;font-size:11.5px;line-height:11.5px;color:#000;font-weight:400;font-style:normal;transform:scaleX(0.9750);">5.000m</span>
<div style="left:617px;top:673px;width:1px;height:5px;background:#000"></div>
<span style="left:598.35px;top:680.47px;font-size:11.5px;line-height:11.5px;color:#000;font-weight:400;font-style:normal;transform:scaleX(0.9750);">5.500m</span>
<div style="left:666px;top:673px;width:1px;height:5px;background:#000"></div>
<span style="left:647.60px;top:680.47px;font-size:11.5px;line-height:11.5px;color:#000;font-weight:400;font-style:normal;transform:scaleX(0.9750);">6.000m</span>
<span style="left:346.20px;top:696.77px;font-size:11.5px;line-height:11.5px;color:#000;font-weight:400;font-style:normal;transform:scaleX(1.0228);">Time (<i>s</i>)</span>
<div style="left:30px;top:547px;width:0;height:0;transform:rotate(-90deg)">
<span style="left:-37.10px;top:-5.43px;font-size:11.5px;line-height:11.5px;color:#000;font-weight:400;font-style:normal;transform:scaleX(1.0648);">Amplitude (<i>V</i>)</span>
</div>
<div style="left:0;top:714px;width:86px;height:20px;overflow:hidden">
<div style="left:0px;top:0px;width:85px;height:24px;background:linear-gradient(to right,#c4c4c4,#c2c2c2 70px,#a8a8a8 78px,#8a8a8a 84px,#808080)"></div>
<div style="left:0px;top:0px;width:85px;height:2px;background:linear-gradient(to right,#d6d6d6,#d6d6d6 70px,#b0b0b0 80px,#8c8c8c)"></div>
<div style="left:0px;top:22px;width:85px;height:2px;background:linear-gradient(#a0a0a0,#8c8c8c)"></div>
<div style="left:9px;top:4px;width:19px;height:16px;background:#c4c4c4;border-top:1px solid #dcdcdc;border-left:1px solid #dcdcdc;border-right:1px solid #8c8c8c;border-bottom:1px solid #8c8c8c;box-sizing:border-box"></div>
<div style="left:12px;top:7px;width:3px;height:3px;background:#3a7a3a"></div>
<div style="left:31px;top:4px;width:19px;height:16px;background:#828282;border-top:1px solid #666;border-left:1px solid #666;border-right:1px solid #b8b8b8;border-bottom:1px solid #b8b8b8;box-sizing:border-box"></div>
<div style="left:34px;top:7px;width:3px;height:3px;background:#30f030"></div>
<div style="left:52px;top:4px;width:19px;height:16px;background:#c4c4c4;border-top:1px solid #dcdcdc;border-left:1px solid #dcdcdc;border-right:1px solid #8c8c8c;border-bottom:1px solid #8c8c8c;box-sizing:border-box"></div>
<div style="left:55px;top:7px;width:3px;height:3px;background:#3a7a3a"></div>
<svg style="left:9px;top:4px" width="19" height="16" shape-rendering="crispEdges"><path d="M4 8.5h13M10.5 2v13" stroke="#000" stroke-width="1"/><rect x="9.5" y="7.5" width="2" height="2" fill="none" stroke="#000"/></svg>
<svg style="left:31px;top:4px" width="19" height="16"><circle cx="11.5" cy="6.5" r="4.2" fill="#e8e8ff" stroke="#000" stroke-width="1.2"/><path d="M9.5 6.5h4M11.5 4.5v4" stroke="#1020c0" stroke-width="1.2"/><path d="M8.5 9.5l-5 4.5" stroke="#000" stroke-width="2.2"/><path d="M8 10.5l-3.5 3" stroke="#ddd" stroke-width="0.7"/><path d="M11 12.5h5l-2.5 3z" fill="#000"/></svg>
<svg style="left:52px;top:4px" width="19" height="16"><path d="M5.500 9.500V4.500a1.200 1.200 0 0 1 2.400 0V8M7.900 8V3.200a1.200 1.200 0 0 1 2.400 0V8M10.300 8V3.500a1.200 1.200 0 0 1 2.400 0V8M12.700 8V5a1.200 1.200 0 0 1 2.400 0V9.500Q15 12 13.500 14.200M5.500 9.500L4 7.600Q2.800 7 3 8.500L6.500 12.500L7 14.200" fill="none" stroke="#000" stroke-width="0.800"/></svg>
</div>
<span style="left:95.20px;top:719.07px;font-size:11.5px;line-height:11.5px;color:#000;font-weight:400;font-style:normal;transform:scaleX(1.0406);">Scintillator signal</span>
<div style="left:416px;top:713px;width:275px;height:21px;background:linear-gradient(to right,#d4d4d4,#c0c0c0 10px,#c0c0c0 262px,#a0a0a0 270px,#808080)"></div>
<div style="left:416px;top:713px;width:275px;height:2px;background:linear-gradient(to right,#d8d8d8,#d4d4d4 260px,#a0a0a0)"></div>
<div style="left:426px;top:716px;width:255px;height:18px;background:linear-gradient(#9c9c9c,#aaaaaa 5px,#b0b0b0)"></div>
<div style="left:429px;top:724px;width:98px;height:10px;background:#cacaca;border-top:1px solid #e4e4e4;border-left:1px solid #e4e4e4;border-right:1px solid #8c8c8c;box-sizing:border-box"></div>
<div style="left:528px;top:724px;width:53px;height:10px;background:#cacaca;border-top:1px solid #e4e4e4;border-left:1px solid #e4e4e4;border-right:1px solid #8c8c8c;box-sizing:border-box"></div>
<div style="left:582px;top:724px;width:75px;height:10px;background:#cacaca;border-top:1px solid #e4e4e4;border-left:1px solid #e4e4e4;border-right:1px solid #8c8c8c;box-sizing:border-box"></div>
<div style="left:659px;top:724px;width:17px;height:10px;background:#cacaca;border-top:1px solid #e4e4e4;border-left:1px solid #e4e4e4;border-right:1px solid #8c8c8c;box-sizing:border-box"></div>
<div style="left:426px;top:724px;width:255px;height:10px;overflow:hidden">
<span style="left:7.30px;top:3.07px;font-size:11.5px;line-height:11.5px;color:#000;font-weight:700;font-style:normal;transform:scaleX(0.9220);">Cursors:</span>
<span style="left:107.20px;top:3.07px;font-size:11.5px;line-height:11.5px;color:#000;font-weight:700;font-style:normal;transform:scaleX(0.8994);">X</span>
<span style="left:161.70px;top:3.07px;font-size:11.5px;line-height:11.5px;color:#000;font-weight:700;font-style:normal;transform:scaleX(0.8733);">Y</span>
<svg style="left:237px;top:4px" width="9" height="6"><path d="M0 5.500L4.500 0.500L9 5.500z" fill="#000"/></svg>
</div>
<div style="left:705px;top:0px;width:8px;height:734px;background:linear-gradient(to right,#b4b4b4,#a8a8a8 5px,#8a8a8a)"></div>
<div style="left:713px;top:0px;width:6px;height:734px;background:#e4e4e4"></div>
<div style="left:719px;top:0px;width:1px;height:734px;background:#fcfcfc"></div>
<div style="left:720px;top:0px;width:16px;height:750px;background:#f0f0f0"></div>
<div style="left:720px;top:0px;width:16px;height:634px;background:#cdcdcd"></div>
<svg style="left:723px;top:722px" width="10" height="7"><path d="M1 1l4 4.200 4-4.200" stroke="#505050" stroke-width="2" fill="none"/></svg>
<div style="left:0px;top:734px;width:720px;height:16px;background:#f0f0f0"></div>
<div style="left:0px;top:734px;width:720px;height:1px;background:#fff"></div>
<div style="left:153px;top:735px;width:544px;height:15px;background:#cdcdcd"></div>
<div style="left:-2px;top:734px;width:137px;height:18px;background:#fff;border:1px solid #000;box-sizing:border-box"></div>
<span style="left:-2.00px;top:735.44px;font-size:12px;line-height:12px;color:#000;font-weight:400;font-style:normal;transform:scaleX(1.0025);">9775.lvproj/My Computer</span>
<svg style="left:139px;top:738px" width="7" height="10"><path d="M5.500 1L1.500 5l4 4" stroke="#505050" stroke-width="2" fill="none"/></svg>
<svg style="left:707px;top:738px" width="7" height="10"><path d="M1.500 1l4 4-4 4" stroke="#505050" stroke-width="2" fill="none"/></svg>
<svg style="left:724px;top:738px" width="12" height="12" shape-rendering="crispEdges"><path d="M8 1h2v2h-2zM5 4h2v2h-2zM8 4h2v2h-2zM2 7h2v2h-2zM5 7h2v2h-2zM8 7h2v2h-2z" fill="#c4c4c4"/></svg>
<div style="left:736px;top:432px;width:449px;height:318px;background:#000"></div>
<div style="left:736px;top:432px;width:328px;height:318px;background:#b4b4b4"></div>
<div style="left:736px;top:432px;width:328px;height:14px;background:linear-gradient(#8e8e8e,#a4a4a4 5px,#b4b4b4 12px)"></div>
<div style="left:1063px;top:432px;width:1px;height:318px;background:#8c8c8c"></div>
<div style="left:1064px;top:432px;width:10px;height:318px;background:#e2e2e2"></div>
<div style="left:1073px;top:432px;width:1px;height:318px;background:#f8f8f8"></div>
<div style="left:1064px;top:444px;width:9px;height:1px;background:#d0d0d0"></div>
<div style="left:1064px;top:456px;width:9px;height:1px;background:#d0d0d0"></div>
<div style="left:1064px;top:468px;width:9px;height:1px;background:#d0d0d0"></div>
<div style="left:1064px;top:480px;width:9px;height:1px;background:#d0d0d0"></div>
<div style="left:1064px;top:492px;width:9px;height:1px;background:#d0d0d0"></div>
<div style="left:1064px;top:504px;width:9px;height:1px;background:#d0d0d0"></div>
<div style="left:1064px;top:516px;width:9px;height:1px;background:#d0d0d0"></div>
<div style="left:1064px;top:528px;width:9px;height:1px;background:#d0d0d0"></div>
<div style="left:1064px;top:540px;width:9px;height:1px;background:#d0d0d0"></div>
<div style="left:1064px;top:552px;width:9px;height:1px;background:#d0d0d0"></div>
<div style="left:1064px;top:564px;width:9px;height:1px;background:#d0d0d0"></div>
<div style="left:1064px;top:576px;width:9px;height:1px;background:#d0d0d0"></div>
<div style="left:1064px;top:588px;width:9px;height:1px;background:#d0d0d0"></div>
<div style="left:1064px;top:600px;width:9px;height:1px;background:#d0d0d0"></div>
<div style="left:1064px;top:612px;width:9px;height:1px;background:#d0d0d0"></div>
<div style="left:1064px;top:624px;width:9px;height:1px;background:#d0d0d0"></div>
<div style="left:1064px;top:636px;width:9px;height:1px;background:#d0d0d0"></div>
<div style="left:1064px;top:648px;width:9px;height:1px;background:#d0d0d0"></div>
<div style="left:1064px;top:660px;width:9px;height:1px;background:#d0d0d0"></div>
<div style="left:1064px;top:672px;width:9px;height:1px;background:#d0d0d0"></div>
<div style="left:1064px;top:684px;width:9px;height:1px;background:#d0d0d0"></div>
<div style="left:1064px;top:696px;width:9px;height:1px;background:#d0d0d0"></div>
<div style="left:1064px;top:708px;width:9px;height:1px;background:#d0d0d0"></div>
<div style="left:1064px;top:720px;width:9px;height:1px;background:#d0d0d0"></div>
<div style="left:1064px;top:732px;width:9px;height:1px;background:#d0d0d0"></div>
<div style="left:1064px;top:744px;width:9px;height:1px;background:#d0d0d0"></div>
<div style="left:1074px;top:432px;width:16px;height:318px;background:#cdcdcd"></div>
<div style="left:943px;top:432px;width:110px;height:9px;background:linear-gradient(to right,#d2d2d2,#c2c2c2 12px,#c0c0c0 94px,#a0a0a0 104px,#8a8a8a)"></div>
<div style="left:943px;top:439px;width:110px;height:2px;background:linear-gradient(#a4a4a4,#8a8a8a)"></div>
<div style="left:1010px;top:432px;width:29px;height:7px;background:#000;border-right:1px solid #e0e0e0;border-bottom:1px solid #e0e0e0;box-sizing:border-box"></div>
<svg style="left:1010px;top:432px" width="28" height="6" shape-rendering="crispEdges"><path d="M3 0.5h2M3.500 0v3M22 1.500h4M24.500 0v3" stroke="#fff" stroke-width="1"/></svg>
<div style="left:955px;top:432px;width:50px;height:3px;overflow:hidden">
<span style="left:3.50px;top:-7.13px;font-size:11.5px;line-height:11.5px;color:#000;font-weight:400;font-style:normal;transform:scaleX(1.1584);">source</span>
</div>
<div style="left:736px;top:444px;width:317px;height:252px;background:#c1c1c1"></div>
<div style="left:736px;top:444px;width:317px;height:3px;background:linear-gradient(#d2d2d2,#d8d8d8 1px,#d0d0d0 2px,#c6c6c6)"></div>
<div style="left:1040px;top:444px;width:13px;height:252px;background:linear-gradient(to right,#c1c1c1,#b4b4b4 5px,#a0a0a0 10px,#808080)"></div>
<div style="left:736px;top:694px;width:317px;height:2px;background:linear-gradient(#a8a8a8,#868686)"></div>
<div style="left:736px;top:453px;width:294px;height:202px;background:#000;border-top:1px solid #5a5a5a;border-right:1px solid #e8e8e8;border-bottom:1px solid #e8e8e8;box-sizing:border-box"></div>
<svg style="left:736px;top:454px" width="293" height="200" viewBox="736 454 293 200" shape-rendering="crispEdges"><path d="M749.5 454V654M756.5 454V654M763.5 454V654M770.5 454V654M784.5 454V654M791.5 454V654M798.5 454V654M805.5 454V654M819.5 454V654M826.5 454V654M833.5 454V654M840.5 454V654M854.5 454V654M861.5 454V654M867.5 454V654M874.5 454V654M888.5 454V654M895.5 454V654M902.5 454V654M909.5 454V654M923.5 454V654M930.5 454V654M937.5 454V654M944.5 454V654M958.5 454V654M965.5 454V654M972.5 454V654M979.5 454V654M993.5 454V654M1000.5 454V654M1007.5 454V654M1014.5 454V654M1028.5 454V654M736 461.5H1029M736 468.5H1029M736 475.5H1029M736 489.5H1029M736 496.5H1029M736 503.5H1029M736 518.5H1029M736 525.5H1029M736 532.5H1029M736 546.5H1029M736 553.5H1029M736 560.5H1029M736 575.5H1029M736 582.5H1029M736 589.5H1029M736 603.5H1029M736 610.5H1029M736 617.5H1029M736 632.5H1029M736 639.5H1029M736 646.5H1029" stroke="#003c00" stroke-width="1" fill="none"/><path d="M742.5 454V654M777.5 454V654M812.5 454V654M847.5 454V654M881.5 454V654M916.5 454V654M951.5 454V654M986.5 454V654M1021.5 454V654M736 482.5H1029M736 511.5H1029M736 539.5H1029M736 568.5H1029M736 596.5H1029M736 625.5H1029" stroke="#006a00" stroke-width="1" fill="none"/><path d="M743.5 454V562M742.5 562V638M736 635.500L742.500 638" stroke="#fff" stroke-width="1.3" fill="none"/><path d="M755.5 454V537M756.5 537V612" stroke="#fff" stroke-width="1.3" fill="none"/><polyline points="756.5,611.8 763.6,612.5 770.5,604.8 777.5,612.5 784.6,613.4 791.7,612.5 798.2,608.0 805.5,608.7 812.6,608.0 819.7,614.5 826.5,609.5 833.6,610.5 840.6,609.5 847.3,613.2 853.8,606.4 860.3,600.7 867.3,600.7 874.3,598.3 881.5,598.3 888.2,593.6 895.3,591.5 902.3,585.3 909.6,583.4 916.5,578.3 923.9,578.3 930.4,573.5 937.6,577.1 944.3,566.1 951.3,571.1 958.5,573.3 965.2,571.4 972.4,569.4 979.6,560.3" stroke="#fff" stroke-width="1.3" fill="none"/><path d="M979.6 560.3V621M980.5 621V654" stroke="#fff" stroke-width="1.3" fill="none"/><path d="M993.500 654V639.300" stroke="#fff" stroke-width="1.3" fill="none"/><polyline points="993.3,639.3 1000.7,639.3 1007.2,644.1 1014.4,642.4 1021.6,641.7 1028.3,645.3" stroke="#fff" stroke-width="1.3" fill="none"/><path d="M740.0 638.5h5M742.5 636.0v5M754.0 611.5h5M756.5 609.0v5M761.0 612.5h5M763.5 610.0v5M768.0 604.5h5M770.5 602.0v5M775.0 612.5h5M777.5 610.0v5M782.0 613.5h5M784.5 611.0v5M789.0 612.5h5M791.5 610.0v5M796.0 608.5h5M798.5 606.0v5M803.0 608.5h5M805.5 606.0v5M810.0 608.5h5M812.5 606.0v5M817.0 614.5h5M819.5 612.0v5M824.0 609.5h5M826.5 607.0v5M831.0 610.5h5M833.5 608.0v5M838.0 609.5h5M840.5 607.0v5M845.0 613.5h5M847.5 611.0v5M851.0 606.5h5M853.5 604.0v5M858.0 600.5h5M860.5 598.0v5M865.0 600.5h5M867.5 598.0v5M872.0 598.5h5M874.5 596.0v5M879.0 598.5h5M881.5 596.0v5M886.0 593.5h5M888.5 591.0v5M893.0 591.5h5M895.5 589.0v5M900.0 585.5h5M902.5 583.0v5M907.0 583.5h5M909.5 581.0v5M914.0 578.5h5M916.5 576.0v5M921.0 578.5h5M923.5 576.0v5M928.0 573.5h5M930.5 571.0v5M935.0 577.5h5M937.5 575.0v5M942.0 566.5h5M944.5 564.0v5M949.0 571.5h5M951.5 569.0v5M956.0 573.5h5M958.5 571.0v5M963.0 571.5h5M965.5 569.0v5M970.0 569.5h5M972.5 567.0v5M977.0 560.5h5M979.5 558.0v5M991.0 639.5h5M993.5 637.0v5M998.0 639.5h5M1000.5 637.0v5M1005.0 644.5h5M1007.5 642.0v5M1012.0 642.5h5M1014.5 640.0v5M1019.0 641.5h5M1021.5 639.0v5M1026.0 645.5h5M1028.5 643.0v5" stroke="#fff" stroke-width="1" fill="none"/></svg>
<div style="left:742px;top:656px;width:1px;height:5px;background:#000"></div>
<span style="left:736.00px;top:662.87px;font-size:11.5px;line-height:11.5px;color:#000;font-weight:400;font-style:normal;transform:scaleX(0.9768);">10</span>
<div style="left:777px;top:656px;width:1px;height:5px;background:#000"></div>
<span style="left:771.70px;top:662.87px;font-size:11.5px;line-height:11.5px;color:#000;font-weight:400;font-style:normal;transform:scaleX(0.8752);">15</span>
<div style="left:812px;top:656px;width:1px;height:5px;background:#000"></div>
<span style="left:806.70px;top:662.87px;font-size:11.5px;line-height:11.5px;color:#000;font-weight:400;font-style:normal;transform:scaleX(0.8752);">20</span>
<div style="left:847px;top:656px;width:1px;height:5px;background:#000"></div>
<span style="left:841.70px;top:662.87px;font-size:11.5px;line-height:11.5px;color:#000;font-weight:400;font-style:normal;transform:scaleX(0.8752);">25</span>
<div style="left:881px;top:656px;width:1px;height:5px;background:#000"></div>
<span style="left:875.70px;top:662.87px;font-size:11.5px;line-height:11.5px;color:#000;font-weight:400;font-style:normal;transform:scaleX(0.8752);">30</span>
<div style="left:916px;top:656px;width:1px;height:5px;background:#000"></div>
<span style="left:910.70px;top:662.87px;font-size:11.5px;line-height:11.5px;color:#000;font-weight:400;font-style:normal;transform:scaleX(0.8752);">35</span>
<div style="left:951px;top:656px;width:1px;height:5px;background:#000"></div>
<span style="left:945.70px;top:662.87px;font-size:11.5px;line-height:11.5px;color:#000;font-weight:400;font-style:normal;transform:scaleX(0.8752);">40</span>
<div style="left:986px;top:656px;width:1px;height:5px;background:#000"></div>
<span style="left:980.70px;top:662.87px;font-size:11.5px;line-height:11.5px;color:#000;font-weight:400;font-style:normal;transform:scaleX(0.8752);">45</span>
<div style="left:1021px;top:656px;width:1px;height:5px;background:#000"></div>
<div style="left:1028px;top:656px;width:1px;height:5px;background:#000"></div>
<span style="left:1022.30px;top:662.87px;font-size:11.5px;line-height:11.5px;color:#000;font-weight:400;font-style:normal;transform:scaleX(0.8674);">51</span>
<span style="left:811.40px;top:679.47px;font-size:11.5px;line-height:11.5px;color:#000;font-weight:400;font-style:normal;transform:scaleX(1.0690);">Acq. number</span>
<div style="left:736px;top:707px;width:89px;height:22px;background:linear-gradient(to right,#c4c4c4,#c2c2c2 73px,#a4a4a4 83px,#8c8c8c)"></div>
<div style="left:736px;top:707px;width:89px;height:2px;background:linear-gradient(to right,#d8d8d8,#d8d8d8 75px,#a0a0a0)"></div>
<div style="left:736px;top:727px;width:89px;height:2px;background:linear-gradient(#a8a8a8,#8a8a8a)"></div>
<div style="left:782px;top:709px;width:29px;height:18px;background:#000;border-right:1px solid #e0e0e0;border-bottom:1px solid #e0e0e0;box-sizing:border-box"></div>
<svg style="left:782px;top:709px" width="28" height="17"><path d="M2 13L10 4L18 13L26 4" stroke="#fff" stroke-width="1.200" fill="none"/></svg>
<span style="left:736.40px;top:712.07px;font-size:11.5px;line-height:11.5px;color:#000;font-weight:400;font-style:normal;transform:scaleX(0.9875);">source</span>
<div style="left:736px;top:732px;width:89px;height:18px;background:linear-gradient(to right,#c1c1c1,#c1c1c1 75px,#a4a4a4 84px,#888)"></div>
<div style="left:736px;top:732px;width:89px;height:3px;background:linear-gradient(#d2d2d2,#d8d8d8 1px,#d0d0d0 2px,#c6c6c6)"></div>
<div style="left:736px;top:741px;width:78px;height:9px;background:#000;border-top:1px solid #5a5a5a;border-right:1px solid #e8e8e8;box-sizing:border-box"></div>
<svg style="left:736px;top:742px" width="77" height="8" viewBox="736 742 77 8" shape-rendering="crispEdges"><path d="M750.5 742V750M757.5 742V750M771.5 742V750M778.5 742V750M792.5 742V750M799.5 742V750" stroke="#003c00" stroke-width="1"/><path d="M750.5 742V750M771.5 742V750M792.5 742V750" stroke="#006a00" stroke-width="1"/></svg>
<span style="left:838.10px;top:717.22px;font-size:12.5px;line-height:12.5px;color:#000;font-weight:400;font-style:normal;transform:scaleX(0.9549);">Cycle time (ms)</span>
<div style="left:837px;top:732px;width:54px;height:18px;background:#d4d4d4"></div>
<div style="left:837px;top:732px;width:54px;height:3px;background:linear-gradient(#8e8e8e,#a2a2a2)"></div>
<div style="left:837px;top:732px;width:4px;height:18px;background:linear-gradient(to right,#969696,#a4a4a4)"></div>
<div style="left:887px;top:732px;width:4px;height:18px;background:#bebebe"></div>
<svg style="left:887px;top:732px" width="4" height="3"><path d="M0 3L4 0V3z" fill="#bebebe"/></svg>
<span style="left:843.10px;top:738.22px;font-size:12.5px;line-height:12.5px;color:#000;font-weight:400;font-style:normal;transform:scaleX(0.8390);">582</span>
<span style="left:994.10px;top:710.22px;font-size:12.5px;line-height:12.5px;color:#000;font-weight:400;font-style:normal;transform:scaleX(0.9583);">Target (A)</span>
<div style="left:993px;top:723px;width:55px;height:27px;background:linear-gradient(to right,#9c9c9c,#a8a8a8 4px,#c0c0c0 50px,#d0d0d0)"></div>
<div style="left:993px;top:723px;width:55px;height:5px;background:linear-gradient(#989898,#a6a6a6)"></div>
<div style="left:993px;top:745px;width:55px;height:5px;background:#c8c8c8"></div>
<div style="left:997px;top:728px;width:46px;height:17px;background:#fff"></div>
<span style="left:999.30px;top:730.84px;font-size:12px;line-height:12px;color:#000;font-weight:400;font-style:normal;transform:scaleX(0.9385);">6E-6</span>
<svg style="left:981px;top:722px" width="13" height="28"><defs><linearGradient id="sp" x1="0" x2="1" y1="0" y2="0"><stop offset="0" stop-color="#8a8a8a"/><stop offset="0.35" stop-color="#d8d8d8"/><stop offset="0.6" stop-color="#cfcfcf"/><stop offset="1" stop-color="#7e7e7e"/></linearGradient></defs><rect x="0.500" y="0.500" width="12" height="27" rx="5.500" fill="url(#sp)" stroke="#8c8c8c" stroke-width="0.800"/><path d="M1 13.500h11" stroke="#8a8a8a" stroke-width="1"/><path d="M3.500 10L6.500 4.500L9.500 10z" fill="#d8d8d8" stroke="#6e6e6e" stroke-width="0.800"/><path d="M3.500 17L6.500 22.500L9.500 17z" fill="#d8d8d8" stroke="#6e6e6e" stroke-width="0.800"/></svg>
<div style="left:736px;top:0px;width:449px;height:432px;background:#e2e2e2"></div>
<div style="left:736px;top:0px;width:3px;height:297px;background:#000"></div>
<div style="left:736px;top:297px;width:3px;height:135px;background:linear-gradient(to right,#8c8c8c 1px,#b8b8b8 1px,#b8b8b8 2px,#909090 2px)"></div>
<div style="left:739px;top:0px;width:446px;height:41px;background:#f0f0f0"></div>
<div style="left:739px;top:15px;width:428px;height:1px;background:#a8a8a8"></div>
<div style="left:739px;top:16px;width:428px;height:1px;background:#fbfbfb"></div>
<div style="left:739px;top:40px;width:446px;height:1px;background:#6e6e6e"></div>
<div style="left:1166px;top:0px;width:1px;height:41px;background:#7a7a7a"></div>
<div style="left:1184px;top:41px;width:1px;height:391px;background:#f4f4f4"></div>
<div style="left:739px;top:0;width:428px;height:15px;overflow:hidden">
<span style="left:7.00px;top:-2.36px;font-size:12px;line-height:12px;color:#000;font-weight:400;font-style:normal;transform:scaleX(0.8943);">File</span>
<span style="left:39.00px;top:-2.36px;font-size:12px;line-height:12px;color:#000;font-weight:400;font-style:normal;transform:scaleX(1.0054);">Edit</span>
<span style="left:73.10px;top:-2.36px;font-size:12px;line-height:12px;color:#000;font-weight:400;font-style:normal;transform:scaleX(0.9846);">View</span>
<span style="left:112.30px;top:-2.36px;font-size:12px;line-height:12px;color:#000;font-weight:400;font-style:normal;transform:scaleX(0.9957);">Project</span>
<span style="left:163.10px;top:-2.36px;font-size:12px;line-height:12px;color:#000;font-weight:400;font-style:normal;transform:scaleX(0.9663);">Operate</span>
<span style="left:220.50px;top:-2.36px;font-size:12px;line-height:12px;color:#000;font-weight:400;font-style:normal;transform:scaleX(0.9816);">Tools</span>
<span style="left:261.30px;top:-2.36px;font-size:12px;line-height:12px;color:#000;font-weight:400;font-style:normal;transform:scaleX(1.0589);">Window</span>
<span style="left:319.90px;top:-2.36px;font-size:12px;line-height:12px;color:#000;font-weight:400;font-style:normal;transform:scaleX(1.0167);">Help</span>
</div>
<svg style="left:792px;top:21px" width="18" height="16" viewBox="792 21 18 16"><path d="M801.300 21.900L808.300 28.500L801.300 35.100z" fill="#000"/><rect x="796" y="24.500" width="6" height="8" fill="#000"/><rect x="792.800" y="26" width="1" height="5" fill="#000"/><rect x="794.500" y="26" width="1" height="5" fill="#000"/><rect x="797" y="22" width="1.400" height="2" fill="#000"/><rect x="799.200" y="22" width="1.400" height="2" fill="#000"/><rect x="797" y="33" width="1.400" height="2" fill="#000"/><rect x="799.200" y="33" width="1.400" height="2" fill="#000"/></svg>
<svg style="left:813px;top:21px" width="18" height="15"><path d="M4.500 1.500h8l1 1v3h3l-4.500 4.500-4-4.500h3v-1.500h-6.500z" fill="#fff" stroke="#000" stroke-width="1"/><path d="M13.500 13.500h-8l-1-1v-3h-3l4.500-4.500 4 4.500h-3v1.500h6.500z" fill="#fff" stroke="#000" stroke-width="1"/><path d="M5.500 1l8 13" stroke="#000" stroke-width="1.300"/></svg>
<svg style="left:839px;top:20px" width="18" height="17" viewBox="839 20 18 17"><path d="M844.800 21.500h5.400l4.300 4.300v5.400l-4.300 4.300h-5.400l-4.300-4.300v-5.400z" fill="#fff" stroke="#1a1a1a" stroke-width="1"/><circle cx="847.500" cy="28.500" r="5.300" fill="#b82424"/><ellipse cx="847.500" cy="26.300" rx="4.200" ry="2.500" fill="#cc5050"/></svg>
<div style="left:864px;top:23px;width:3px;height:10px;background:#000"></div>
<div style="left:870px;top:23px;width:3px;height:10px;background:#000"></div>
<svg style="left:1146.500px;top:19.800px" width="14" height="17" viewBox="0 0 15.500 18.500"><path d="M3 5.500c0-5.500 8-5.500 8-0.500c0 3-4 3-4 6.200" fill="none" stroke="#404040" stroke-width="3" transform="translate(0.8,0.8)"/><circle cx="7.800" cy="14.600" r="1.500" fill="#404040"/><path d="M3 5.500c0-5.500 8-5.500 8-0.500c0 3-4 3-4 6.200" fill="none" stroke="#f0e000" stroke-width="2.600"/><circle cx="7" cy="14" r="1.500" fill="#f0e000"/></svg>
<div style="left:1168px;top:1px;width:20px;height:32px;background:#fff;border:1px solid #000;box-sizing:border-box"></div>
<div style="left:1171px;top:4px;width:14px;height:16px;background:#1a1a1a"></div>
<div style="left:1172px;top:5px;width:13px;height:9px;background:#000;border:1px solid #9a9a9a;box-sizing:border-box"></div>
<div style="left:1172px;top:15px;width:13px;height:4px;background:#cfcba0"></div>
<svg style="left:1172px;top:5px" width="13" height="20"><path d="M1.500 5.500c1-4.500 2.500-4.500 3.500-1s2.500 3.500 3.500 0s2.500-3.500 3.500 1" fill="none" stroke="#00c000" stroke-width="1.200"/><path d="M1.500 13a5.500 5.500 0 0 0 11 0" fill="none" stroke="#0000a0" stroke-width="1.200"/><circle cx="7.500" cy="14" r="2" fill="none" stroke="#ff0000" stroke-width="1"/><path d="M8.500 12l4-2" stroke="#ff0000" stroke-width="1"/></svg>
<div style="left:758px;top:45px;width:366px;height:304px;background:linear-gradient(#e8e8e8,#e2e2e2 20%,#d0d0d0);border:1px solid #8a8a8a;border-radius:5px;box-sizing:border-box;box-shadow:inset 1px 1px 0 #fcfcfc, inset -1px -1px 0 #f4f4f4, 0 1px 2px rgba(0,0,0,0.28)"></div>
<div style="left:797px;top:60px;width:306px;height:257px;background:#000;border-left:1px solid #555;border-top:1px solid #555;border-right:1px solid #f4f4f4;border-bottom:1px solid #f4f4f4;box-sizing:border-box"></div>
<div style="left:888px;top:198px;width:50px;height:50px;background:radial-gradient(ellipse 20.500px 17.800px at 24.900px 23.800px,#ffac48 0,#ffa242 42%,#ff6e28 52%,#fa2206 62%,#cc0a00 70%,#800000 78%,#380000 88%,#000 100%)"></div>
<div style="left:791px;top:61px;width:5px;height:1px;background:#000"></div>
<span style="left:777.20px;top:55.87px;font-size:11.5px;line-height:11.5px;color:#000;font-weight:400;font-style:normal;transform:scaleX(0.9924);">10</span>
<div style="left:791px;top:89px;width:5px;height:1px;background:#000"></div>
<span style="left:777.20px;top:83.87px;font-size:11.5px;line-height:11.5px;color:#000;font-weight:400;font-style:normal;transform:scaleX(0.9924);">20</span>
<div style="left:791px;top:118px;width:5px;height:1px;background:#000"></div>
<span style="left:777.20px;top:112.87px;font-size:11.5px;line-height:11.5px;color:#000;font-weight:400;font-style:normal;transform:scaleX(0.9924);">30</span>
<div style="left:791px;top:146px;width:5px;height:1px;background:#000"></div>
<span style="left:777.20px;top:140.87px;font-size:11.5px;line-height:11.5px;color:#000;font-weight:400;font-style:normal;transform:scaleX(0.9924);">40</span>
<div style="left:791px;top:174px;width:5px;height:1px;background:#000"></div>
<span style="left:777.20px;top:168.87px;font-size:11.5px;line-height:11.5px;color:#000;font-weight:400;font-style:normal;transform:scaleX(0.9924);">50</span>
<div style="left:791px;top:202px;width:5px;height:1px;background:#000"></div>
<span style="left:777.20px;top:196.87px;font-size:11.5px;line-height:11.5px;color:#000;font-weight:400;font-style:normal;transform:scaleX(0.9924);">60</span>
<div style="left:791px;top:231px;width:5px;height:1px;background:#000"></div>
<span style="left:777.20px;top:225.87px;font-size:11.5px;line-height:11.5px;color:#000;font-weight:400;font-style:normal;transform:scaleX(0.9924);">70</span>
<div style="left:791px;top:259px;width:5px;height:1px;background:#000"></div>
<span style="left:777.20px;top:253.87px;font-size:11.5px;line-height:11.5px;color:#000;font-weight:400;font-style:normal;transform:scaleX(0.9924);">80</span>
<div style="left:791px;top:287px;width:5px;height:1px;background:#000"></div>
<span style="left:777.20px;top:281.87px;font-size:11.5px;line-height:11.5px;color:#000;font-weight:400;font-style:normal;transform:scaleX(0.9924);">90</span>
<div style="left:791px;top:315px;width:5px;height:1px;background:#000"></div>
<span style="left:771.10px;top:309.87px;font-size:11.5px;line-height:11.5px;color:#000;font-weight:400;font-style:normal;transform:scaleX(0.9798);">100</span>
<div style="left:798px;top:318px;width:1px;height:5px;background:#000"></div>
<span style="left:795.10px;top:324.77px;font-size:11.5px;line-height:11.5px;color:#000;font-weight:400;font-style:normal;transform:scaleX(1.0615);">0</span>
<div style="left:836px;top:318px;width:1px;height:5px;background:#000"></div>
<span style="left:830.00px;top:324.77px;font-size:11.5px;line-height:11.5px;color:#000;font-weight:400;font-style:normal;transform:scaleX(1.0159);">20</span>
<div style="left:874px;top:318px;width:1px;height:5px;background:#000"></div>
<span style="left:868.00px;top:324.77px;font-size:11.5px;line-height:11.5px;color:#000;font-weight:400;font-style:normal;transform:scaleX(1.0159);">40</span>
<div style="left:912px;top:318px;width:1px;height:5px;background:#000"></div>
<span style="left:906.00px;top:324.77px;font-size:11.5px;line-height:11.5px;color:#000;font-weight:400;font-style:normal;transform:scaleX(1.0159);">60</span>
<div style="left:950px;top:318px;width:1px;height:5px;background:#000"></div>
<span style="left:944.00px;top:324.77px;font-size:11.5px;line-height:11.5px;color:#000;font-weight:400;font-style:normal;transform:scaleX(1.0159);">80</span>
<div style="left:988px;top:318px;width:1px;height:5px;background:#000"></div>
<span style="left:978.90px;top:324.77px;font-size:11.5px;line-height:11.5px;color:#000;font-weight:400;font-style:normal;transform:scaleX(1.0007);">100</span>
<div style="left:1026px;top:318px;width:1px;height:5px;background:#000"></div>
<span style="left:1016.90px;top:324.77px;font-size:11.5px;line-height:11.5px;color:#000;font-weight:400;font-style:normal;transform:scaleX(1.0007);">120</span>
<div style="left:1064px;top:318px;width:1px;height:5px;background:#000"></div>
<span style="left:1054.90px;top:324.77px;font-size:11.5px;line-height:11.5px;color:#000;font-weight:400;font-style:normal;transform:scaleX(1.0007);">140</span>
<div style="left:1102px;top:318px;width:1px;height:5px;background:#000"></div>
<span style="left:1092.90px;top:324.77px;font-size:11.5px;line-height:11.5px;color:#000;font-weight:400;font-style:normal;transform:scaleX(1.0007);">160</span>
<div style="left:1128px;top:47px;width:20px;height:150px;background:#000"></div>
<div style="left:1129px;top:48px;width:18px;height:3px;background:#fff"></div>
<div style="left:1129px;top:53px;width:18px;height:143px;background:linear-gradient(#ffe05a 0,#ffb840 14%,#ff8028 25%,#ff3010 38%,#ff0000 47%,#c00000 58%,#780000 70%,#300000 84%,#000 93%)"></div>
<div style="left:1150px;top:53px;width:5px;height:1px;background:#000"></div>
<span style="left:1156.20px;top:47.87px;font-size:11.5px;line-height:11.5px;color:#000;font-weight:400;font-style:normal;transform:scaleX(0.9694);">250</span>
<div style="left:1150px;top:122px;width:5px;height:1px;background:#000"></div>
<span style="left:1156.20px;top:116.87px;font-size:11.5px;line-height:11.5px;color:#000;font-weight:400;font-style:normal;transform:scaleX(0.9121);">161</span>
<div style="left:1150px;top:190px;width:5px;height:1px;background:#000"></div>
<span style="left:1156.20px;top:184.87px;font-size:11.5px;line-height:11.5px;color:#000;font-weight:400;font-style:normal;transform:scaleX(0.8830);">72</span>
<div style="left:1182px;top:113px;width:3px;height:1px;background:#000"></div>
<div style="left:758px;top:379px;width:92px;height:30px;background:linear-gradient(#ececec,#e6e6e6 50%,#dcdcdc 53%,#d6d6d6);border:1px solid #8e8e8e;border-radius:4px;box-sizing:border-box;box-shadow:inset 1px 1px 0 #fdfdfd, inset -1px -1px 0 #f2f2f2, 1px 1px 1px #c8c8c8"></div>
<div style="left:768px;top:386px;width:16px;height:16px;background:#ff0000;border-right:1px solid #b00000;border-bottom:1px solid #b00000;box-sizing:border-box"></div>
<span style="left:802.20px;top:388.74px;font-size:12px;line-height:12px;color:#ff1010;font-weight:400;font-style:normal;transform:scaleX(0.8870);">STOP</span>
<span style="left:865.10px;top:360.84px;font-size:12px;line-height:12px;color:#000;font-weight:400;font-style:normal;transform:scaleX(0.9385);">Gain</span>
<div style="left:866px;top:378px;width:90px;height:31px;background:linear-gradient(#eaeaea,#dedede);border:1px solid #8e8e8e;border-radius:4px;box-sizing:border-box;box-shadow:inset 1px 1px 0 #fdfdfd, inset -1px -1px 0 #f2f2f2, 1px 1px 1px #cfcfcf"></div>
<div style="left:872px;top:383.5px;width:13px;height:9px;background:linear-gradient(#f6f6f6,#dcdcdc);border:1px solid #9a9a9a;border-radius:2px;box-sizing:border-box"></div>
<div style="left:872px;top:393.5px;width:13px;height:9px;background:linear-gradient(#f6f6f6,#dcdcdc);border:1px solid #9a9a9a;border-radius:2px;box-sizing:border-box"></div>
<svg style="left:872px;top:383.5px" width="13" height="19"><path d="M3.500 6L6.500 3L9.500 6z" fill="#707070"/><path d="M3.500 13L6.500 16L9.500 13z" fill="#707070"/></svg>
<div style="left:889px;top:383px;width:62px;height:21px;background:#f6f6f6;border-top:1px solid #7a7a7a;border-left:1px solid #8a8a8a;border-right:1px solid #b0b0b0;border-bottom:1px solid #c8c8c8;box-sizing:border-box"></div>
<span style="left:893.40px;top:387.44px;font-size:12px;line-height:12px;color:#000;font-weight:400;font-style:normal;transform:scaleX(0.9570);">0</span>
<span style="left:973.00px;top:360.84px;font-size:12px;line-height:12px;color:#000;font-weight:400;font-style:normal;transform:scaleX(0.9419);">Exposure (ms)</span>
<div style="left:974px;top:378px;width:102px;height:31px;background:linear-gradient(#eaeaea,#dedede);border:1px solid #8e8e8e;border-radius:4px;box-sizing:border-box;box-shadow:inset 1px 1px 0 #fdfdfd, inset -1px -1px 0 #f2f2f2, 1px 1px 1px #cfcfcf"></div>
<div style="left:980px;top:383.5px;width:13px;height:9px;background:linear-gradient(#f6f6f6,#dcdcdc);border:1px solid #9a9a9a;border-radius:2px;box-sizing:border-box"></div>
<div style="left:980px;top:393.5px;width:13px;height:9px;background:linear-gradient(#f6f6f6,#dcdcdc);border:1px solid #9a9a9a;border-radius:2px;box-sizing:border-box"></div>
<svg style="left:980px;top:383.5px" width="13" height="19"><path d="M3.500 6L6.500 3L9.500 6z" fill="#707070"/><path d="M3.500 13L6.500 16L9.500 13z" fill="#707070"/></svg>
<div style="left:997px;top:383px;width:74px;height:21px;background:#f6f6f6;border-top:1px solid #7a7a7a;border-left:1px solid #8a8a8a;border-right:1px solid #b0b0b0;border-bottom:1px solid #c8c8c8;box-sizing:border-box"></div>
<span style="left:1001.50px;top:387.44px;font-size:12px;line-height:12px;color:#000;font-weight:400;font-style:normal;transform:scaleX(0.9086);">100</span>
<span style="left:1105.10px;top:361.84px;font-size:12px;line-height:12px;color:#000;font-weight:400;font-style:normal;transform:scaleX(1.0005);">FrameNumber</span>
<div style="left:1106px;top:378px;width:78px;height:31px;background:linear-gradient(#eaeaea,#dedede);border:1px solid #8e8e8e;border-radius:4px;box-sizing:border-box;box-shadow:inset 1px 1px 0 #fdfdfd, inset -1px -1px 0 #f2f2f2, 1px 1px 1px #cfcfcf"></div>
<div style="left:1111px;top:383px;width:68px;height:21px;background:#d4d4d4;border-top:1px solid #8a8a8a;border-left:1px solid #909090;border-right:1px solid #b8b8b8;border-bottom:1px solid #f0f0f0;box-sizing:border-box"></div>
<span style="left:1115.00px;top:387.44px;font-size:12px;line-height:12px;color:#000;font-weight:400;font-style:normal;transform:scaleX(0.9731);">39</span>
<div style="left:739px;top:415px;width:446px;height:17px;background:#f0f0f0"></div>
<div style="left:922px;top:416px;width:232px;height:15px;background:#cdcdcd"></div>
<div style="left:739px;top:415px;width:166px;height:17px;background:#fff;border:1px solid #000;box-sizing:border-box"></div>
<span style="left:742.10px;top:417.24px;font-size:12px;line-height:12px;color:#000;font-weight:400;font-style:normal;transform:scaleX(1.0341);">Thorcam.lvproj/My Computer</span>
<svg style="left:909px;top:419px" width="7" height="10"><path d="M5.500 1L1.500 5l4 4" stroke="#505050" stroke-width="2" fill="none"/></svg>
<svg style="left:1173px;top:419px" width="7" height="10"><path d="M1.500 1l4 4-4 4" stroke="#505050" stroke-width="2" fill="none"/></svg>
<div style="left:905px;top:431px;width:280px;height:1px;background:#f8f8f8"></div>
</div></body></html>
